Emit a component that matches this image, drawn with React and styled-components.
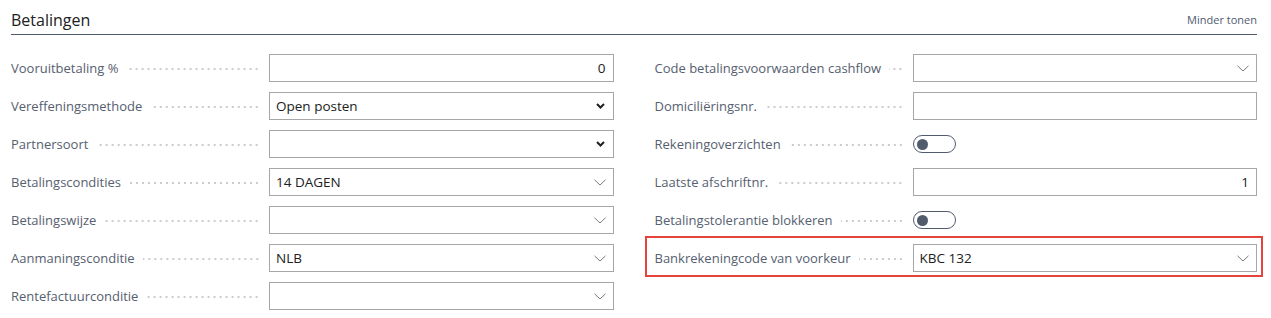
import React from "react"
import styled, { createGlobalStyle } from "styled-components"

const GlobalStyle = createGlobalStyle`
  body {
    margin: 0;
    background: #ffffff;
    font-family: "Open Sans", "Noto Sans", sans-serif;
  }
`

const Page = styled.div`
  padding: 0 14px 0 11px;
`

const Header = styled.div`
  display: flex;
  align-items: center;
  justify-content: space-between;
  height: 35px;
  padding-top: 5px;
  box-sizing: border-box;
  border-bottom: 1px solid #505c6d;
`

const Title = styled.h2`
  margin: 0;
  font-size: 16px;
  font-weight: 400;
  color: #212121;
  line-height: 22px;
`

const ShowLess = styled.span`
  font-size: 11px;
  color: #505c6d;
`

const Form = styled.div`
  display: grid;
  grid-template-columns: 1fr 1fr;
  column-gap: 41px;
  margin-top: 19px;
`

const Column = styled.div`
  display: flex;
  flex-direction: column;
  gap: 10px;
`

const Row = styled.div`
  position: relative;
  display: grid;
  grid-template-columns: 258px 1fr;
  height: 28px;

  ${props =>
    props.highlight &&
    `
    &::after {
      content: "";
      position: absolute;
      left: -10px;
      right: -6px;
      top: -8px;
      bottom: -5px;
      border: 2px solid #e5433c;
      pointer-events: none;
    }
  `}
`

const Label = styled.div`
  display: flex;
  align-items: center;
  font-size: 13px;
  color: #56606f;
  white-space: nowrap;
`

const Leader = styled.span`
  flex: 1;
  height: 2px;
  margin: 1px 9px 0 8px;
  background-image: radial-gradient(circle, #cccccc 0.8px, transparent 1.1px);
  background-size: 6px 2px;
  background-repeat: repeat-x;
  background-position: right center;
`

const Box = styled.div`
  display: flex;
  align-items: center;
  justify-content: ${props => (props.right ? "flex-end" : "space-between")};
  height: 28px;
  box-sizing: border-box;
  border: 1px solid #a6a6a6;
  padding: 0 7px 0 6px;
  font-size: 13.5px;
  color: #212121;
`

const Chevron = styled.svg`
  flex: none;
  margin-right: ${props => (props.bold ? "1px" : "0")};
`

const ToggleWrap = styled.div`
  display: flex;
  align-items: center;
`

const Toggle = styled.span`
  display: flex;
  align-items: center;
  width: 43px;
  height: 18px;
  box-sizing: border-box;
  border: 1.5px solid #505c6d;
  border-radius: 9px;
  padding-left: 3px;
`

const Knob = styled.span`
  width: 11px;
  height: 11px;
  border-radius: 50%;
  background: #505c6d;
`

const ThinChevron = () => (
  <Chevron width="12" height="7" viewBox="0 0 12 7">
    <path d="M0.5 0.8 L6 6 L11.5 0.8" fill="none" stroke="#7a7a7a" strokeWidth="1" />
  </Chevron>
)

const BoldChevron = () => (
  <Chevron bold width="9" height="6" viewBox="0 0 9 6">
    <path d="M1 1 L4.5 4.5 L8 1" fill="none" stroke="#212121" strokeWidth="2" />
  </Chevron>
)

const Field = ({ label, kind, value, highlight }) => (
  <Row highlight={highlight}>
    <Label>
      {label}
      <Leader />
    </Label>
    {kind === "toggle" ? (
      <ToggleWrap>
        <Toggle>
          <Knob />
        </Toggle>
      </ToggleWrap>
    ) : kind === "number" ? (
      <Box right>{value}</Box>
    ) : (
      <Box>
        <span>{value}</span>
        {kind === "select" && <BoldChevron />}
        {kind === "lookup" && <ThinChevron />}
      </Box>
    )}
  </Row>
)

const leftFields = [
  { label: "Vooruitbetaling %", kind: "number", value: "0" },
  { label: "Vereffeningsmethode", kind: "select", value: "Open posten" },
  { label: "Partnersoort", kind: "select", value: "" },
  { label: "Betalingscondities", kind: "lookup", value: "14 DAGEN" },
  { label: "Betalingswijze", kind: "lookup", value: "" },
  { label: "Aanmaningsconditie", kind: "lookup", value: "NLB" },
  { label: "Rentefactuurconditie", kind: "lookup", value: "" }
]

const rightFields = [
  { label: "Code betalingsvoorwaarden cashflow", kind: "lookup", value: "" },
  { label: "Domiciliëringsnr.", kind: "text", value: "" },
  { label: "Rekeningoverzichten", kind: "toggle" },
  { label: "Laatste afschriftnr.", kind: "number", value: "1" },
  { label: "Betalingstolerantie blokkeren", kind: "toggle" },
  { label: "Bankrekeningcode van voorkeur", kind: "lookup", value: "KBC 132", highlight: true }
]

export default function App() {
  return (
    <Page>
      <GlobalStyle />
      <Header>
        <Title>Betalingen</Title>
        <ShowLess>Minder tonen</ShowLess>
      </Header>
      <Form>
        <Column>
          {leftFields.map(f => (
            <Field key={f.label} {...f} />
          ))}
        </Column>
        <Column>
          {rightFields.map(f => (
            <Field key={f.label} {...f} />
          ))}
        </Column>
      </Form>
    </Page>
  )
}
